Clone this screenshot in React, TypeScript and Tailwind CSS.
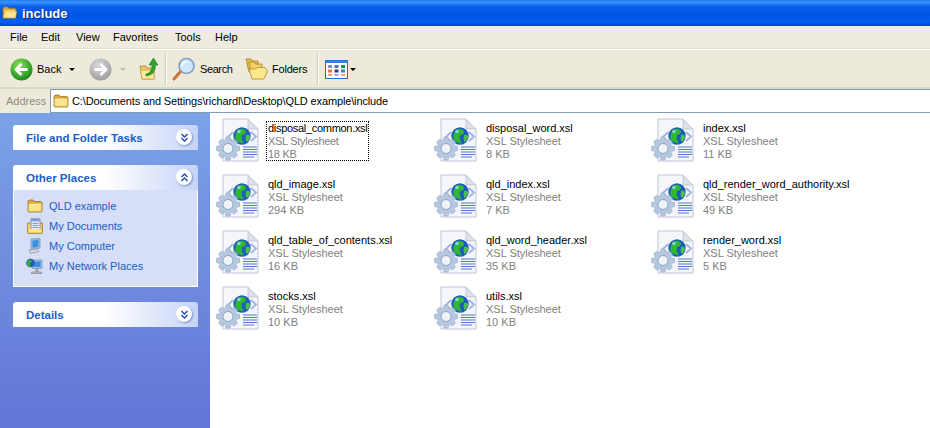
import React from "react";

const FONT = "font-['Liberation_Sans',sans-serif]";

function Folder({ size = 16, open = false }: { size?: number; open?: boolean }) {
  return (
    <svg width={size} height={size * 0.875} viewBox="0 0 16 14" className="shrink-0">
      <path d="M1 3 Q1 1 3 1 H6 L7.5 2.5 H13.5 Q15 2.5 15 4 V12 Q15 13 14 13 H2 Q1 13 1 12Z" fill="#d9a93a" stroke="#9a7420" strokeWidth="0.8" />
      <path d={open ? "M1.5 12.5 L3.5 6 H15.5 L14 12.5Z" : "M1.8 5 H14.2 V12.2 H1.8Z"} fill="#fbe58e" stroke="#e9c65d" strokeWidth="0.5" />
      <path d="M2 5.2 H14" stroke="#fff6c8" strokeWidth="0.8" />
    </svg>
  );
}

function XslIcon() {
  return (
    <svg width="48" height="48" viewBox="0 0 48 48" className="shrink-0">
      <path d="M7 4 H32 L42 14 V46 H7Z" fill="#f4f6fb" stroke="#bfc4d2" strokeWidth="1" />
      <path d="M32 4 V14 H42Z" fill="#dde0e8" stroke="#bfc4d2" strokeWidth="0.8" />
      <path d="M17 17 L12 22 L17 27 M35 17 L40 21.5 L35 26" fill="none" stroke="#a3b2e2" strokeWidth="1.8" />
      <circle cx="26" cy="21" r="8.7" fill="#1c5cc0" />
      <path d="M22 15 Q27 12 30 16 Q30 20 26 20 Q25 24 28 28.5 Q22 28 19.5 24 Q18.5 19 22 15Z" fill="#2fb82f" />
      <path d="M30 20 Q34 19 34 22 Q33 26 30.5 27 Q29 24 30 20Z" fill="#4cc04a" />
      <circle cx="23" cy="16.5" r="1.8" fill="#a8d8f5" opacity="0.8" />
      <path d="M27 32 H41 M27 34.5 H41 M27 37 H41 M27 39.5 H41 M27 42 H38" stroke="#5479cc" strokeWidth="1.1" />
      <path d="M10 22 h4 l1 4 l3.4 -1.8 l3 2.8 l-1.9 3.4 l4 1 v4.2 l-4 1 l1.9 3.4 l-3 3 l-3.4 -1.9 l-1 3.9 h-4 l-1 -3.9 l-3.4 1.9 l-3 -3 l1.9 -3.4 l-4 -1 v-4.2 l4 -1 l-1.9 -3.4 l3 -2.8 l3.4 1.8Z" fill="#b4c8e0" stroke="#9fb2cc" strokeWidth="0.7" />
      <circle cx="12" cy="33.5" r="5" fill="#f0f3fa" stroke="#8ea3c0" strokeWidth="1" />
    </svg>
  );
}

function Chevrons({ up = false }: { up?: boolean }) {
  return (
    <div className="w-[16px] h-[16px] mt-[4px] self-start rounded-full bg-white shadow-[1px_1px_2px_#7f8fc8] flex items-center justify-center">
      <svg width="9" height="9" viewBox="0 0 9 9">
        <path d={up ? "M1.5 4 L4.5 1 L7.5 4 M1.5 8 L4.5 5 L7.5 8" : "M1.5 1 L4.5 4 L7.5 1 M1.5 5 L4.5 8 L7.5 5"} fill="none" stroke="#1f4bb0" strokeWidth="1.4" />
      </svg>
    </div>
  );
}

function NavCircle({ dir, active }: { dir: "l" | "r"; active: boolean }) {
  return (
    <svg width="23" height="23" viewBox="0 0 23 23" className="shrink-0">
      <defs>
        <radialGradient id="navg" cx="40%" cy="30%" r="80%">
          <stop offset="0" stopColor="#8fdc5a" />
          <stop offset="0.6" stopColor="#36a92b" />
          <stop offset="1" stopColor="#1a7a1a" />
        </radialGradient>
        <radialGradient id="navd" cx="40%" cy="30%" r="80%">
          <stop offset="0" stopColor="#d9d9d9" />
          <stop offset="1" stopColor="#989898" />
        </radialGradient>
      </defs>
      <circle cx="11.5" cy="11.5" r="11" fill={active ? "url(#navg)" : "url(#navd)"} />
      <path d={dir === "l" ? "M17.5 11.5 H7 M11.5 6 L6 11.5 L11.5 17" : "M5.5 11.5 H16 M11.5 6 L17 11.5 L11.5 17"} fill="none" stroke="#fff" strokeWidth="2.8" />
    </svg>
  );
}

function Caret({ dim = false }: { dim?: boolean }) {
  return <div className={`w-0 h-0 border-x-[3px] border-x-transparent border-t-[3px] ${dim ? "border-t-[#b8b8b0]" : "border-t-black"}`} />;
}

function UpIcon() {
  return (
    <svg width="20" height="24" viewBox="0 0 20 24" className="shrink-0">
      <path d="M1 9 H7 L8.5 11 H15 V22 H3Z" fill="#e8c566" stroke="#a88530" strokeWidth="0.8" />
      <path d="M3 22 L1.5 13 H13 L16 22Z" fill="#fbe99e" stroke="#c9a543" strokeWidth="0.8" />
      <path d="M7 17 Q13 16 13 8 H10 L14.5 1 L19 8 H16.5 Q16.5 18 7 19Z" fill="#2fa32f" stroke="#1d7a1d" strokeWidth="0.6" />
    </svg>
  );
}

function SearchIcon() {
  return (
    <svg width="24" height="24" viewBox="0 0 24 24" className="shrink-0">
      <path d="M9 14 L2 22" stroke="#c8763a" strokeWidth="3" strokeLinecap="round" />
      <circle cx="14.5" cy="9" r="7.5" fill="#cfe6fb" stroke="#7f9cc4" strokeWidth="1.6" />
      <path d="M10 9 Q11 5 15 4.5" stroke="#fff" strokeWidth="1.6" fill="none" />
    </svg>
  );
}

function FoldersIcon() {
  return (
    <svg width="23" height="22" viewBox="0 0 23 22" className="shrink-0">
      <path d="M1 1 H6 L8 3 H13 V14 H4Z" fill="#e6bd4c" stroke="#a8842c" strokeWidth="0.8" />
      <path d="M4 4 H9 L11 6 H17 V18 H7Z" fill="#efcf66" stroke="#a8842c" strokeWidth="0.8" />
      <path d="M7 21 L4 11 H11 L12.5 9.5 H20 L22.5 13 L19 21Z" fill="#fde78a" stroke="#b08c30" strokeWidth="0.8" />
    </svg>
  );
}

function ViewsIcon() {
  const c = ["#7f8fc8", "#5a6db0", "#1f8f3a", "#e8763a", "#1d3f9f", "#2e8fa0", "#e8a090", "#a0a8c8", "#e8b050"];
  return (
    <svg width="23" height="19" viewBox="0 0 23 19" className="shrink-0">
      <rect x="0.5" y="0.5" width="22" height="18" fill="#fff" stroke="#1f6fd0" />
      <rect x="0.5" y="0.5" width="22" height="2.5" fill="#2f84e0" />
      {c.map((col, i) => (
        <rect key={i} x={3 + (i % 3) * 6.5} y={5 + Math.floor(i / 3) * 4.5} width="4" height={i > 5 ? 2 : 3} fill={col} />
      ))}
    </svg>
  );
}

function DocsIcon() {
  return (
    <svg width="16" height="16" viewBox="0 0 16 16" className="shrink-0">
      <path d="M0.5 5 H15.5 V14.5 Q15.5 15.5 14.5 15.5 H1.5 Q0.5 15.5 0.5 14.5Z" fill="#f0cd6c" stroke="#a5802b" strokeWidth="0.8" />
      <rect x="4" y="0.8" width="9" height="11" fill="#dfe8f7" stroke="#6b86b8" strokeWidth="0.8" />
      <rect x="4.2" y="1" width="8.6" height="2.4" fill="#7f9fd8" />
      <path d="M5.5 5.5 H11.5 M5.5 7.5 H11.5 M5.5 9.5 H11.5" stroke="#7b8ca8" strokeWidth="0.8" />
      <path d="M2 11 H14 V14 H2Z" fill="#fbe594" />
    </svg>
  );
}

function ComputerIcon() {
  return (
    <svg width="16" height="16" viewBox="0 0 16 16" className="shrink-0">
      <path d="M4 1 L13 0.5 V10 L4 11.5Z" fill="#8fc0ee" stroke="#8a97ab" strokeWidth="0.8" />
      <path d="M5.5 2.5 L11.5 2 V8.8 L5.5 9.8Z" fill="#3f8fe0" />
      <path d="M2 12 L10 11 L12 13.5 L3.5 15.5Z" fill="#d4d6dc" stroke="#8f939c" strokeWidth="0.7" />
    </svg>
  );
}

function NetworkIcon() {
  return (
    <svg width="17" height="16" viewBox="0 0 17 16" className="shrink-0">
      <path d="M6 2 H16 V10.5 H6Z" fill="#8fc0ee" stroke="#8a97ab" strokeWidth="0.8" />
      <path d="M7.5 3.5 H14.5 V9 H7.5Z" fill="#3f8fe0" />
      <path d="M6 14 H15 L16 15.5 H5Z" fill="#c8cad2" stroke="#70747c" strokeWidth="0.6" />
      <rect x="9.5" y="10.5" width="3" height="3.5" fill="#9aa0ac" />
      <circle cx="4.5" cy="5" r="4.3" fill="#1d5db8" />
      <path d="M2 2.5 Q5 1 6 3 Q5 5 4 5 Q4 7 5 9 Q2 8.5 1 6 Q1 4 2 2.5Z" fill="#3cae38" />
    </svg>
  );
}

function Separator() {
  return <div className="w-px h-[32px] bg-[#d2cdb8] border-r border-white box-content shrink-0" />;
}

function PanelHeader({ title, up }: { title: string; up?: boolean }) {
  return (
    <div className="h-[25px] rounded-t-[3px] bg-gradient-to-r from-white via-white to-[#c6d3f7] flex items-center justify-between pl-[13px] pr-[6px]">
      <span className="mt-[2px] text-[11.5px] font-bold text-[#215dc6] leading-none">{title}</span>
      <Chevrons up={up} />
    </div>
  );
}

const files: [string, string][] = [
  ["disposal_common.xsl", "18 KB"],
  ["disposal_word.xsl", "8 KB"],
  ["index.xsl", "11 KB"],
  ["qld_image.xsl", "294 KB"],
  ["qld_index.xsl", "7 KB"],
  ["qld_render_word_authority.xsl", "49 KB"],
  ["qld_table_of_contents.xsl", "16 KB"],
  ["qld_word_header.xsl", "35 KB"],
  ["render_word.xsl", "5 KB"],
  ["stocks.xsl", "10 KB"],
  ["utils.xsl", "10 KB"],
];

const places: [string, React.ReactNode][] = [
  ["QLD example", <Folder key="f" />],
  ["My Documents", <DocsIcon key="d" />],
  ["My Computer", <ComputerIcon key="c" />],
  ["My Network Places", <NetworkIcon key="n" />],
];

const menu: [string, string][] = [
  ["File", "w-[31px]"],
  ["Edit", "w-[35px]"],
  ["View", "w-[37px]"],
  ["Favorites", "w-[62px]"],
  ["Tools", "w-[40px]"],
  ["Help", "w-[30px]"],
];

export default function App() {
  return (
    <div className={`w-[930px] h-[428px] overflow-hidden flex flex-col bg-white text-[11px] text-black ${FONT}`}>
      <div className="h-[26px] shrink-0 bg-[linear-gradient(180deg,#1f7cf0_0%,#3a93ff_8%,#0a5fea_25%,#0054e3_60%,#0060f2_85%,#0040c8_100%)] flex items-center pl-[2px] gap-[5px]">
        <Folder size={15} open />
        <span className="text-white font-bold text-[13px] leading-none [text-shadow:1px_1px_1px_#0a2a80]">include</span>
      </div>
      <div className="h-[23px] shrink-0 bg-[#efebde] flex items-center pl-[10px] border-b border-[#e4e0cf]">
        {menu.map(([m, w]) => (
          <span key={m} className={w}>{m}</span>
        ))}
      </div>
      <div className="h-[40px] shrink-0 bg-[#eeeadb] border-t border-white border-b-2 border-b-[#ded8c4] flex items-center pl-[10px] pt-px">
        <NavCircle dir="l" active />
        <span className="ml-[4px] w-[25px]">Back</span>
        <div className="ml-[7px]"><Caret /></div>
        <div className="ml-[14px]"><NavCircle dir="r" active={false} /></div>
        <div className="ml-[8px]"><Caret dim /></div>
        <div className="ml-[13px]"><UpIcon /></div>
        <div className="ml-[6px]"><Separator /></div>
        <div className="ml-[5px]"><SearchIcon /></div>
        <span className="ml-[4px] w-[32px] tracking-[-0.4px]">Search</span>
        <div className="ml-[13px]"><FoldersIcon /></div>
        <span className="ml-[4px] w-[35px] tracking-[-0.2px]">Folders</span>
        <div className="ml-[10px]"><Separator /></div>
        <div className="ml-[6px]"><ViewsIcon /></div>
        <div className="ml-[2px]"><Caret /></div>
      </div>
      <div className="h-[24px] shrink-0 bg-[#eeeadb] flex items-stretch">
        <div className="w-[50px] flex items-center pl-[6px] text-[#8b8b80] shrink-0">Address</div>
        <div className="flex-1 bg-white border-y border-[#7f9db9] border-l flex items-center pl-[2px] gap-[3px]">
          <Folder />
          <span className="tracking-[-0.14px]">C:\Documents and Settings\richardl\Desktop\QLD example\include</span>
        </div>
      </div>
      <div className="flex-1 flex min-h-0">
        <aside className="w-[210px] shrink-0 bg-gradient-to-b from-[#7ba2e7] to-[#6375d6] pt-[12px] pl-[13px] pr-[12px] flex flex-col gap-[15px]">
          <PanelHeader title="File and Folder Tasks" />
          <div>
            <PanelHeader title="Other Places" up />
            <div className="h-[97px] bg-[#d6dff7] border-x border-b border-white pl-[12px] pt-[6px] flex flex-col">
              {places.map(([name, icon]) => (
                <div key={name} className="h-[20px] flex items-center gap-[6px] text-[#215dc6]">
                  <div className="w-[17px] flex justify-center shrink-0">{icon}</div>
                  <span>{name}</span>
                </div>
              ))}
            </div>
          </div>
          <PanelHeader title="Details" />
        </aside>
        <main className="flex-1 pl-[6px] pt-[2px] grid grid-cols-[218px_217px_auto] auto-rows-[56px] content-start">
          {files.map(([name, size], i) => (
            <div key={name} className="flex items-start gap-[3px]">
              <XslIcon />
              <div className={`mt-[7px] h-[38px] flex flex-col leading-[13px] px-px ${i === 0 ? "outline outline-1 outline-dotted outline-black tracking-[-0.3px]" : ""}`}>
                <span>{name}</span>
                <span className="text-[#7f7f7f]">XSL Stylesheet</span>
                <span className="text-[#7f7f7f]">{size}</span>
              </div>
            </div>
          ))}
        </main>
      </div>
    </div>
  );
}
